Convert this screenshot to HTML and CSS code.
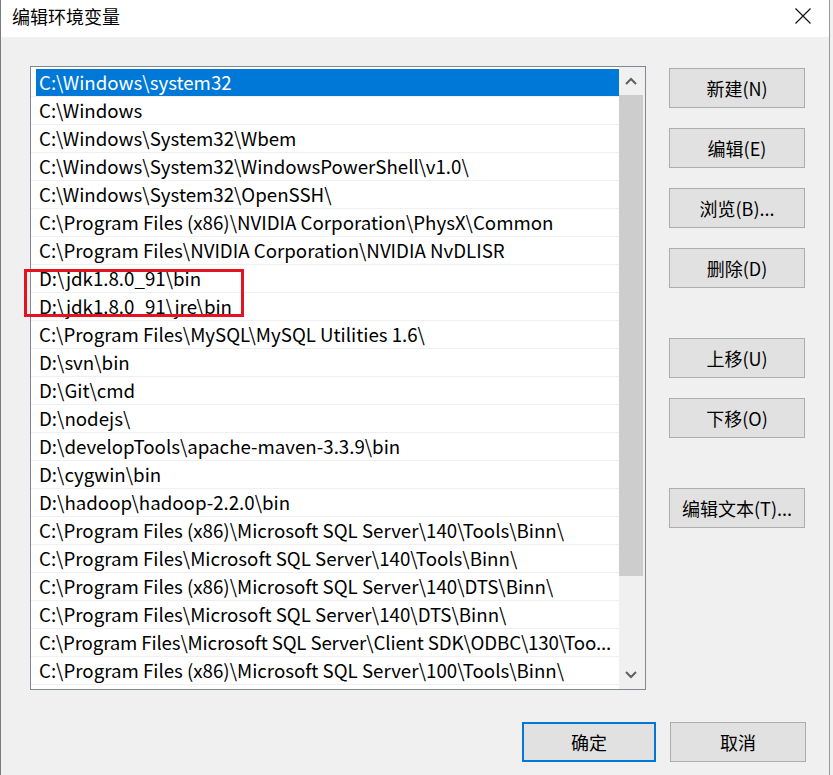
FILE: index.html
```html
<!DOCTYPE html>
<html>
<head>
	<meta charset="utf-8">
	<title>编辑环境变量</title>
	<link rel="stylesheet" href="styles.css">
</head>
<body>
<div class="window">
	<div class="titlebar">
		<span class="title">编辑环境变量</span>
		<svg class="close" width="16" height="16" viewBox="0 0 16 16">
			<path d="M0.5 0.5 L15.5 15.5 M15.5 0.5 L0.5 15.5" stroke="#111" stroke-width="1.2" fill="none"/>
		</svg>
	</div>

	<div class="main">
		<div class="listbox">
			<ul class="items">
				<li class="selected"><span>C:\Windows\system32</span></li>
				<li><span>C:\Windows</span></li>
				<li><span>C:\Windows\System32\Wbem</span></li>
				<li><span>C:\Windows\System32\WindowsPowerShell\v1.0\</span></li>
				<li><span>C:\Windows\System32\OpenSSH\</span></li>
				<li><span>C:\Program Files (x86)\NVIDIA Corporation\PhysX\Common</span></li>
				<li><span>C:\Program Files\NVIDIA Corporation\NVIDIA NvDLISR</span></li>
				<li><span>D:\jdk1.8.0_91\bin</span></li>
				<li><span>D:\jdk1.8.0_91\jre\bin</span></li>
				<li><span>C:\Program Files\MySQL\MySQL Utilities 1.6\</span></li>
				<li><span>D:\svn\bin</span></li>
				<li><span>D:\Git\cmd</span></li>
				<li><span>D:\nodejs\</span></li>
				<li><span>D:\developTools\apache-maven-3.3.9\bin</span></li>
				<li><span>D:\cygwin\bin</span></li>
				<li><span>D:\hadoop\hadoop-2.2.0\bin</span></li>
				<li><span>C:\Program Files (x86)\Microsoft SQL Server\140\Tools\Binn\</span></li>
				<li><span>C:\Program Files\Microsoft SQL Server\140\Tools\Binn\</span></li>
				<li><span>C:\Program Files (x86)\Microsoft SQL Server\140\DTS\Binn\</span></li>
				<li><span>C:\Program Files\Microsoft SQL Server\140\DTS\Binn\</span></li>
				<li class="tight"><span>C:\Program Files\Microsoft SQL Server\Client SDK\ODBC\130\Too...</span></li>
				<li><span>C:\Program Files (x86)\Microsoft SQL Server\100\Tools\Binn\</span></li>
			</ul>
			<div class="scrollbar">
				<div class="arrow">
					<svg width="12" height="8" viewBox="0 0 12 8"><path d="M1 7 L6 2 L11 7" stroke="#606060" stroke-width="2" fill="none"/></svg>
				</div>
				<div class="track"><div class="thumb"></div></div>
				<div class="arrow">
					<svg width="12" height="8" viewBox="0 0 12 8"><path d="M1 1 L6 6 L11 1" stroke="#606060" stroke-width="2" fill="none"/></svg>
				</div>
			</div>
		</div>

		<div class="side-buttons">
			<button class="btn">新建(N)</button>
			<button class="btn">编辑(E)</button>
			<button class="btn">浏览(B)...</button>
			<button class="btn gap-after">删除(D)</button>
			<button class="btn">上移(U)</button>
			<button class="btn gap-after">下移(O)</button>
			<button class="btn">编辑文本(T)...</button>
		</div>

		<div class="marker"></div>
	</div>

	<div class="footer">
		<button class="btn btn-default">确定</button>
		<button class="btn">取消</button>
	</div>
</div>
</body>
</html>
```

FILE: styles.css
```css
body, ul {
	margin: 0;
}

ul {
	padding-left: 0;
	list-style: none;
}

body {
	background: #f0f0f0;
	font-family: "Noto Sans CJK SC", "Noto Sans", sans-serif;
	font-size: 18px;
	color: #000;
}

.window {
	width: 828px;
	height: 775px;
	border-left: 1px solid #7c7c7c;
	border-right: 1px solid #9a9a9a;
	background: #f0f0f0;
}

.titlebar {
	height: 37px;
	background: #ffffff;
	display: flex;
	align-items: center;
	justify-content: space-between;
	padding: 0 18px 6px 11px;
	box-sizing: border-box;
}

.title {
	font-size: 18px;
	line-height: 20px;
}

.main {
	position: relative;
	display: flex;
	padding: 29px 0 0 29px;
}

.listbox {
	width: 614px;
	height: 622px;
	border: 1px solid #828790;
	background: #ffffff;
	display: flex;
	overflow: hidden;
}

.items {
	flex: 1;
	padding-top: 2px;
	overflow: hidden;
	font-size: 18.7px;
}

.items li {
	height: 27px;
	border-bottom: 1px solid #f0f0f0;
	padding-left: 5px;
	display: flex;
}

.items li span {
	flex: 1;
	padding-left: 3px;
	line-height: 26px;
	white-space: nowrap;
	overflow: hidden;
}

.items li.tight span {
	letter-spacing: -0.15px;
}

.items li.selected span {
	background: #0078d7;
	color: #ffffff;
}

.scrollbar {
	width: 26px;
	background: #f0f0f0;
	display: flex;
	flex-direction: column;
}

.arrow {
	height: 28px;
	display: flex;
	align-items: center;
	justify-content: center;
	padding-right: 2px;
}

.track {
	flex: 1;
	padding-right: 2px;
}

.thumb {
	height: 481px;
	background: #cdcdcd;
}

.side-buttons {
	display: flex;
	flex-direction: column;
	gap: 20px;
	margin-left: 23px;
	padding-top: 2px;
}

.btn {
	width: 136px;
	height: 40px;
	background: #e1e1e1;
	border: 1px solid #adadad;
	font-family: "Noto Sans CJK SC", "Noto Sans", sans-serif;
	font-size: 18px;
	color: #000;
	padding: 0;
}

.gap-after {
	margin-bottom: 30px;
}

.marker {
	position: absolute;
	left: 23px;
	top: 232px;
	width: 214px;
	height: 42px;
	border: 3px solid #e3141f;
}

.footer {
	display: flex;
	justify-content: flex-end;
	gap: 14px;
	padding: 32px 23px 0 0;
}

.btn-default {
	width: 134px;
	border: 2px solid #0078d7;
}
```
